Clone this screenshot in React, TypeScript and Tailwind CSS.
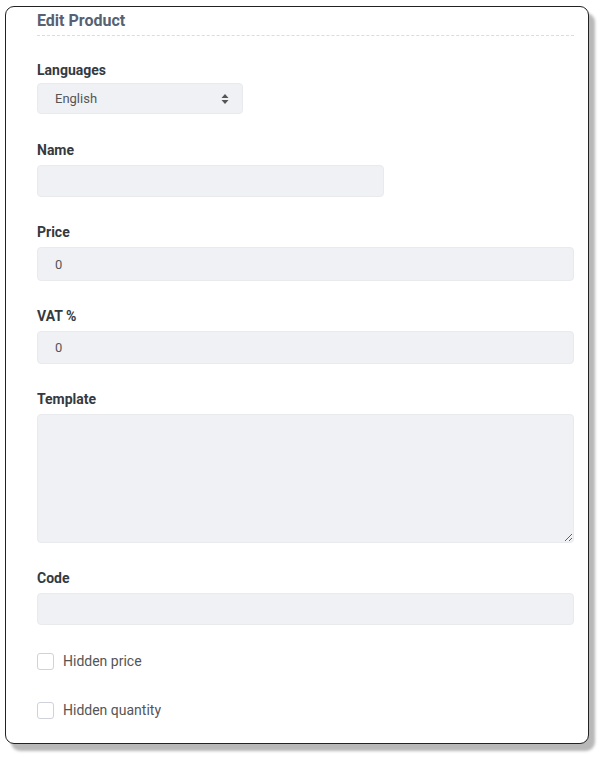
const SortIcon = () => (
  <svg width="8" height="12" viewBox="0 0 8 12" className="text-[#555]">
    <path d="M4 1 L7.5 5 H0.5 Z" fill="currentColor" />
    <path d="M4 11 L7.5 7 H0.5 Z" fill="currentColor" />
  </svg>
);

const Label = ({ children }: { children: React.ReactNode }) => (
  <div className="text-[14px] leading-[18px] font-bold text-[#343a40] mb-[6px]">{children}</div>
);

const inputCls =
  "w-full h-[33px] rounded-[4px] bg-[#f0f1f5] border border-[#e9eaee] px-[17px] text-[13px] text-[#555] outline-none";

const Check = ({ label }: { label: string }) => (
  <label className="flex items-center gap-[9px] text-[14px] leading-[17px] text-[#555]">
    <span className="w-[17px] h-[17px] rounded-[3px] border border-[#cfd2d8] bg-white" />
    {label}
  </label>
);

export default function App() {
  return (
    <main className="min-h-screen bg-white pt-[6px] pl-[5px] font-['Roboto',sans-serif]">
      <div className="w-[584px] h-[738px] bg-white border border-[#222] rounded-[9px] shadow-[6px_7px_3px_#b8b8b8] pl-[31px] pr-[14px] pt-[3px]">
        <div className="border-b border-dashed border-[#d9dce0] pb-[4px]">
          <h1 className="text-[16px] leading-[21px] font-bold text-[#566173]">Edit Product</h1>
        </div>

        <div className="mt-[25px]">
          <div className="text-[14px] leading-[18px] font-bold text-[#343a40] mb-[4px]">Languages</div>
          <div className="w-[206px] h-[31px] rounded-[4px] bg-[#f0f1f5] border border-[#e9eaee] pl-[17px] pr-[13px] flex items-center justify-between text-[13px] text-[#555]">
            <span>English</span>
            <SortIcon />
          </div>
        </div>

        <div className="mt-[27px]">
          <Label>Name</Label>
          <input className={inputCls + " !w-[347px] !h-[32px]"} />
        </div>

        <div className="mt-[26px]">
          <Label>Price</Label>
          <input className={inputCls + " !h-[34px]"} defaultValue="0" />
        </div>

        <div className="mt-[26px]">
          <Label>VAT %</Label>
          <input className={inputCls} defaultValue="0" />
        </div>

        <div className="mt-[26px]">
          <Label>Template</Label>
          <textarea className="block w-full h-[129px] rounded-[4px] bg-[#f0f1f5] border border-[#e9eaee] px-[17px] py-2 text-[13px] text-[#555] outline-none resize-y" />
        </div>

        <div className="mt-[26px]">
          <Label>Code</Label>
          <input className={inputCls + " !h-[32px]"} />
        </div>

        <div className="mt-[28px] flex flex-col gap-[32px]">
          <Check label="Hidden price" />
          <Check label="Hidden quantity" />
        </div>
      </div>
    </main>
  );
}
